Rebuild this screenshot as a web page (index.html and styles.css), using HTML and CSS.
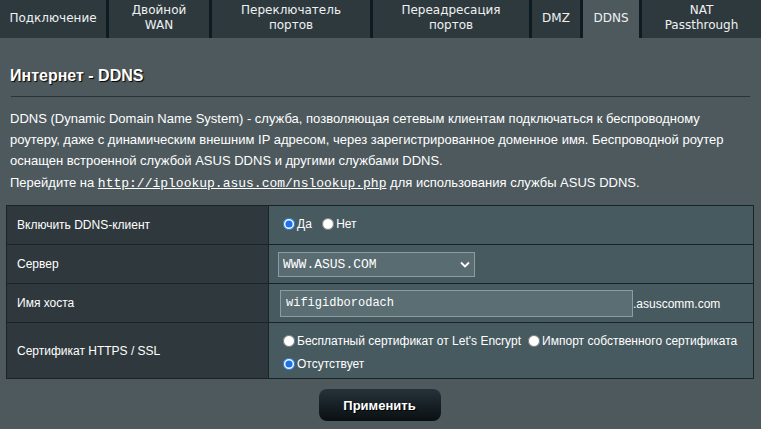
FILE: index.html
```html
<!DOCTYPE html>
<html lang="ru">
<head>
<meta charset="utf-8">
<title>Интернет - DDNS</title>
<link rel="stylesheet" href="styles.css">
</head>
<body>
<nav class="tabs">
  <div class="tab t1">Подключение</div>
  <div class="tab t2">Двойной<br>WAN</div>
  <div class="tab t3">Переключатель<br>портов</div>
  <div class="tab t4">Переадресация<br>портов</div>
  <div class="tab t5">DMZ</div>
  <div class="tab t6 active">DDNS</div>
  <div class="tab t7">NAT<br>Passthrough</div>
</nav>
<main class="content">
  <h1 class="title">Интернет - DDNS</h1>
  <div class="split"></div>
  <p class="desc">DDNS (Dynamic Domain Name System) - служба, позволяющая сетевым клиентам подключаться к беспроводному роутеру, даже с динамическим внешним IP адресом, через зарегистрированное доменное имя. Беспроводной роутер оснащен встроенной службой ASUS DDNS и другими службами DDNS.</p>
  <p class="desc goto">Перейдите на <a class="link" href="#">http://iplookup.asus.com/nslookup.php</a> для использования службы ASUS DDNS.</p>
  <table class="form">
    <tr class="row">
      <th>Включить DDNS-клиент</th>
      <td>
        <label class="opt"><input type="radio" name="en" checked>Да</label>
        <label class="opt"><input type="radio" name="en">Нет</label>
      </td>
    </tr>
    <tr class="row">
      <th>Сервер</th>
      <td>
        <div class="select-wrap">
          <select class="select"><option>WWW.ASUS.COM</option></select>
          <svg class="chev" width="10" height="7" viewBox="0 0 10 7"><path d="M1 1.5 L5 5.5 L9 1.5" fill="none" stroke="#ffffff" stroke-width="1.8"/></svg>
        </div>
      </td>
    </tr>
    <tr class="row">
      <th>Имя хоста</th>
      <td><input class="host" type="text" value="wifigidborodach"><span class="suffix">.asuscomm.com</span></td>
    </tr>
    <tr class="row tall">
      <th>Сертификат HTTPS / SSL</th>
      <td>
        <div class="line">
          <label class="opt"><input type="radio" name="ssl">Бесплатный сертификат от Let's Encrypt</label>
          <label class="opt"><input type="radio" name="ssl">Импорт собственного сертификата</label>
        </div>
        <div class="line">
          <label class="opt"><input type="radio" name="ssl" checked>Отсутствует</label>
        </div>
      </td>
    </tr>
  </table>
  <div class="actions"><button class="apply" type="button">Применить</button></div>
</main>
</body>
</html>
```
FILE: styles.css
```css
* { box-sizing: border-box; }
html, body { margin: 0; padding: 0; }
body {
  width: 761px;
  height: 429px;
  overflow: hidden;
  background: #4d595d;
  font-family: "Liberation Sans", Arial, sans-serif;
  color: #ffffff;
}
.tabs {
  display: flex;
  gap: 3px;
  height: 38px;
  background: #0e1b20;
}
.tab {
  display: flex;
  align-items: center;
  justify-content: center;
  text-align: center;
  background: #2e393d;
  color: #eef1f2;
  font-family: "DejaVu Sans", Verdana, sans-serif;
  font-size: 12px;
  line-height: 15px;
  padding-bottom: 2px;
}
.tab.active { background: #4d595d; }
.t1 { width: 106px; }
.t2 { width: 100px; }
.t3 { width: 158px; }
.t4 { width: 156px; }
.t5 { width: 48px; }
.t6 { width: 56px; }
.t7 { flex: 1; }
.content {
  padding: 28px 7px 0 6px;
}
.title {
  margin: 0 0 10px 4px;
  font-size: 16px;
  line-height: 20px;
  font-weight: bold;
  text-shadow: 1px 1px 1px #000000;
}
.split {
  height: 1px;
  margin: 0 4px 0 5px;
  background: #2a3438;
}
.desc {
  margin: 11px 0 0 4px;
  font-size: 13px;
  line-height: 21px;
  width: 740px;
}
.desc.goto { margin-top: 1px; }
.link {
  color: #ffffff;
  font-family: "Liberation Mono", "Courier New", monospace;
  font-size: 13px;
  text-decoration: underline;
}
.form {
  margin-top: 11px;
  width: 748px;
  border-collapse: collapse;
  font-size: 12px;
}
.form th, .form td {
  border: 1px solid #1b2327;
  height: 39px;
}
.form th {
  width: 262px;
  background: #2f393d;
  text-align: left;
  font-weight: normal;
  padding: 0 0 0 10px;
}
.form td {
  background: #475a5f;
  padding: 0 9px;
  white-space: nowrap;
}
.row.tall th, .row.tall td { height: 56px; }
.row.tall td { padding-top: 3px; }
.line { height: 23px; display: flex; align-items: center; }
.opt {
  display: inline-flex;
  align-items: center;
  margin-right: 2px;
  white-space: nowrap;
  flex: none;
}
.opt input {
  width: 12px;
  height: 12px;
  margin: 0 2px 0 5px;
  accent-color: #1a73e8;
}
.select-wrap {
  position: relative;
  width: 197px;
  height: 25px;
}
.select {
  appearance: none;
  -webkit-appearance: none;
  width: 197px;
  height: 25px;
  margin: 0;
  padding: 0 0 0 4px;
  background: #596c71;
  border: 1px solid #8e9b9f;
  border-radius: 0;
  color: #ffffff;
  font-family: "Liberation Mono", "Courier New", monospace;
  font-size: 13px;
}
.chev {
  position: absolute;
  right: 5px;
  top: 9px;
}
.host {
  width: 353px;
  height: 27px;
  margin: 0 0 0 2px;
  padding: 0 0 0 5px;
  background: #5a6e73;
  border: 1px solid #8e9b9f;
  color: #ffffff;
  font-family: "Liberation Mono", "Courier New", monospace;
  font-size: 12px;
  vertical-align: middle;
}
.suffix { vertical-align: middle; }
.actions {
  display: flex;
  justify-content: center;
  margin-top: 10px;
  padding-right: 1px;
}
.apply {
  width: 122px;
  height: 32px;
  border: 0;
  border-radius: 8px;
  background: linear-gradient(#26323a, #0a0f11);
  color: #ffffff;
  font-family: "Liberation Sans", Arial, sans-serif;
  font-size: 13px;
  font-weight: bold;
  text-shadow: 1px 1px 0 #000000;
}
```
